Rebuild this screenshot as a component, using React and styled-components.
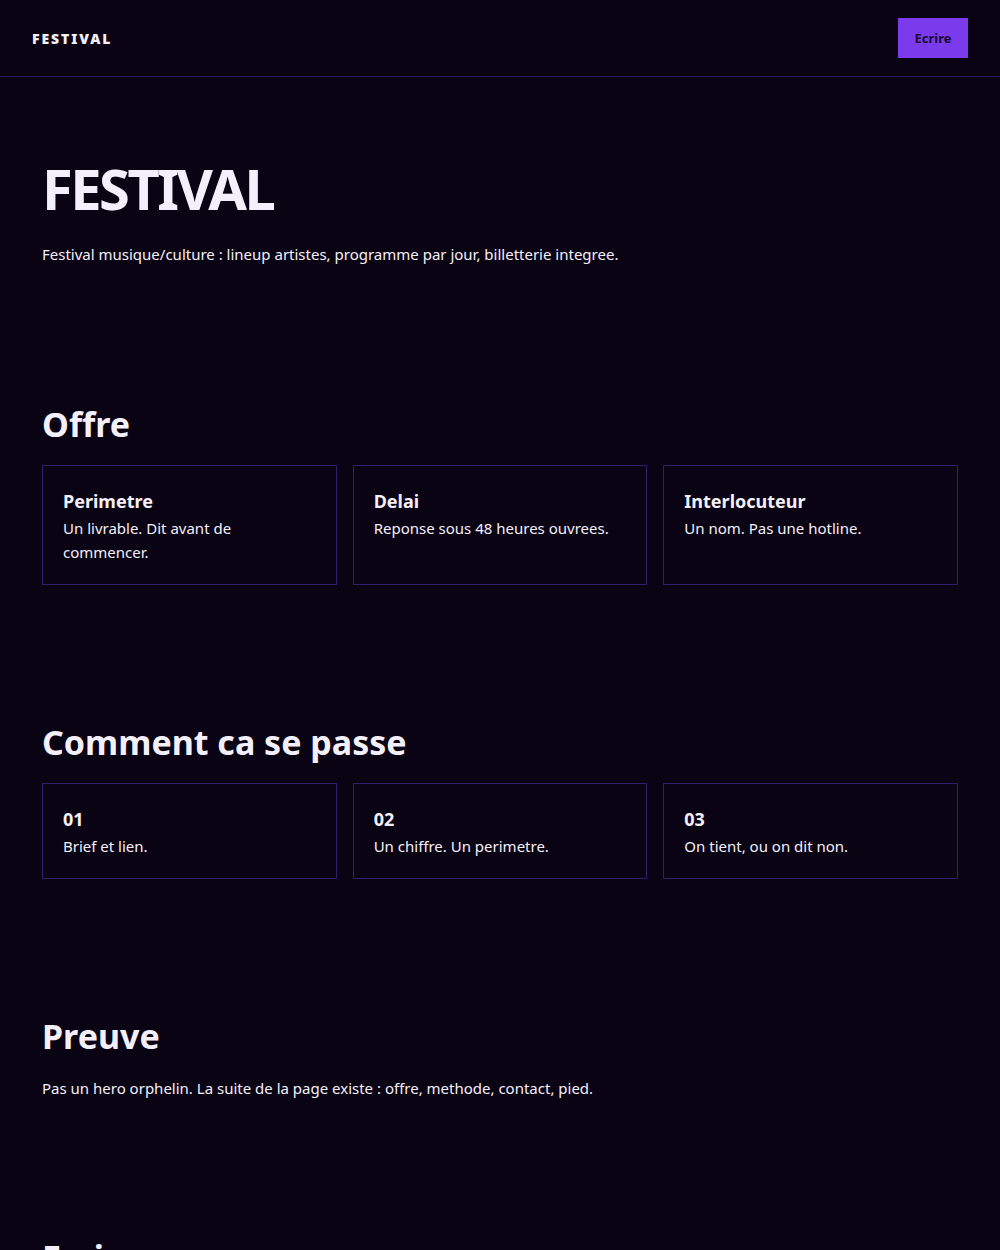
import styled, { createGlobalStyle } from "styled-components"

const GlobalStyle = createGlobalStyle`
  html, body {
    margin: 0;
    padding: 0;
    background: #0a0314;
  }
  body {
    color: #f4f0fb;
    font-family: "Noto Sans", "Open Sans", sans-serif;
  }
  * { box-sizing: border-box; }
`

const Page = styled.div`
  min-height: 1250px;
  background: #0a0314;
`

const Nav = styled.header`
  display: flex;
  align-items: center;
  justify-content: space-between;
  height: 77px;
  padding: 0 32px;
  border-bottom: 1px solid #2a1b55;
`

const Logo = styled.div`
  font-size: 14px;
  font-weight: 900;
  letter-spacing: 1.9px;
  text-transform: uppercase;
`

const NavButton = styled.button`
  width: 70px;
  height: 40px;
  border: none;
  background: #7c3aed;
  color: #1a0933;
  font-family: inherit;
  font-size: 13px;
  font-weight: 700;
  cursor: pointer;
`

const Hero = styled.section`
  padding: 79px 42px 70px;
`

const Title = styled.h1`
  margin: 0 0 22px;
  font-size: 56px;
  line-height: 64px;
  font-weight: 700;
  letter-spacing: -2.5px;
`

const Lead = styled.p`
  margin: 0;
  font-size: 15px;
  line-height: 1.6;
`

const Section = styled.section`
  padding: 68px 42px 69px;
`

const Heading = styled.h2`
  margin: 0 0 20px;
  font-size: 34px;
  line-height: 1.2;
  font-weight: 700;
`

const Grid = styled.div`
  display: grid;
  grid-template-columns: repeat(3, 1fr);
  gap: 16px;
`

const Card = styled.div`
  border: 1px solid #2e1f66;
  padding: 20px;
`

const CardTitle = styled.div`
  font-size: 18px;
  font-weight: 700;
  line-height: 30px;
`

const CardText = styled.div`
  font-size: 15px;
  line-height: 1.6;
`

const offre = [
  { titre: "Perimetre", texte: "Un livrable. Dit avant de commencer." },
  { titre: "Delai", texte: "Reponse sous 48 heures ouvrees." },
  { titre: "Interlocuteur", texte: "Un nom. Pas une hotline." },
]

const etapes = [
  { titre: "01", texte: "Brief et lien." },
  { titre: "02", texte: "Un chiffre. Un perimetre." },
  { titre: "03", texte: "On tient, ou on dit non." },
]

const App = () => {
  return (
    <Page>
      <GlobalStyle />
      <Nav>
        <Logo>Festival</Logo>
        <NavButton>Ecrire</NavButton>
      </Nav>

      <Hero>
        <Title>FESTIVAL</Title>
        <Lead>Festival musique/culture : lineup artistes, programme par jour, billetterie integree.</Lead>
      </Hero>

      <Section>
        <Heading>Offre</Heading>
        <Grid>
          {offre.map((item) => (
            <Card key={item.titre}>
              <CardTitle>{item.titre}</CardTitle>
              <CardText>{item.texte}</CardText>
            </Card>
          ))}
        </Grid>
      </Section>

      <Section>
        <Heading>Comment ca se passe</Heading>
        <Grid>
          {etapes.map((item) => (
            <Card key={item.titre}>
              <CardTitle>{item.titre}</CardTitle>
              <CardText>{item.texte}</CardText>
            </Card>
          ))}
        </Grid>
      </Section>

      <Section>
        <Heading>Preuve</Heading>
        <Lead>Pas un hero orphelin. La suite de la page existe : offre, methode, contact, pied.</Lead>
      </Section>

      <Section>
        <Heading>Ecrire</Heading>
      </Section>
    </Page>
  )
}

export default App
